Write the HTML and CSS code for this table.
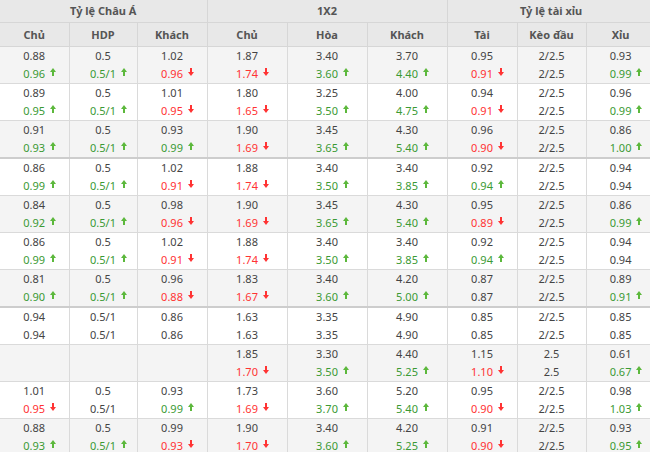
FILE: index.html
```html
<!DOCTYPE html>
<html lang="vi">
<head>
<meta charset="utf-8">
<title>Tỷ lệ kèo</title>
<link rel="stylesheet" href="styles.css">
</head>
<body>
<table class="odds">
<colgroup>
<col class="c69"><col class="c68"><col class="c70">
<col class="c80"><col class="c80"><col class="c80">
<col class="c70"><col class="c69"><col class="c69">
</colgroup>
<thead>
<tr class="h1"><th colspan="3" class="first">Tỷ lệ Châu Á</th><th colspan="3">1X2</th><th colspan="3">Tỷ lệ tài xỉu</th></tr>
<tr class="h2"><th class="first">Chủ</th><th>HDP</th><th>Khách</th><th>Chủ</th><th>Hòa</th><th>Khách</th><th>Tài</th><th>Kèo đầu</th><th>Xỉu</th></tr>
</thead>
<tbody>
<tr class="alt">
<td class="first"><div>0.88</div><div class="g">0.96<span class="up"></span></div></td>
<td><div>0.5</div><div class="g">0.5/1<span class="up"></span></div></td>
<td><div>1.02</div><div class="r">0.96<span class="dn"></span></div></td>
<td><div>1.87</div><div class="r">1.74<span class="dn"></span></div></td>
<td><div>3.40</div><div class="g">3.60<span class="up"></span></div></td>
<td><div>3.70</div><div class="g">4.40<span class="up"></span></div></td>
<td><div>0.95</div><div class="r">0.91<span class="dn"></span></div></td>
<td><div>2/2.5</div><div>2/2.5</div></td>
<td><div>0.93</div><div class="g">0.99<span class="up"></span></div></td>
</tr>
<tr>
<td class="first"><div>0.89</div><div class="g">0.95<span class="up"></span></div></td>
<td><div>0.5</div><div class="g">0.5/1<span class="up"></span></div></td>
<td><div>1.01</div><div class="r">0.95<span class="dn"></span></div></td>
<td><div>1.80</div><div class="r">1.65<span class="dn"></span></div></td>
<td><div>3.25</div><div class="g">3.50<span class="up"></span></div></td>
<td><div>4.00</div><div class="g">4.75<span class="up"></span></div></td>
<td><div>0.94</div><div class="r">0.91<span class="dn"></span></div></td>
<td><div>2/2.5</div><div>2/2.5</div></td>
<td><div>0.96</div><div class="g">0.99<span class="up"></span></div></td>
</tr>
<tr class="alt">
<td class="first"><div>0.91</div><div class="g">0.93<span class="up"></span></div></td>
<td><div>0.5</div><div class="g">0.5/1<span class="up"></span></div></td>
<td><div>0.93</div><div class="g">0.99<span class="up"></span></div></td>
<td><div>1.90</div><div class="r">1.69<span class="dn"></span></div></td>
<td><div>3.45</div><div class="g">3.65<span class="up"></span></div></td>
<td><div>4.30</div><div class="g">5.40<span class="up"></span></div></td>
<td><div>0.96</div><div class="r">0.90<span class="dn"></span></div></td>
<td><div>2/2.5</div><div>2/2.5</div></td>
<td><div>0.86</div><div class="g">1.00<span class="up"></span></div></td>
</tr>
<tr class="grp">
<td class="first"><div>0.86</div><div class="g">0.99<span class="up"></span></div></td>
<td><div>0.5</div><div class="g">0.5/1<span class="up"></span></div></td>
<td><div>1.02</div><div class="r">0.91<span class="dn"></span></div></td>
<td><div>1.88</div><div class="r">1.74<span class="dn"></span></div></td>
<td><div>3.40</div><div class="g">3.50<span class="up"></span></div></td>
<td><div>3.40</div><div class="g">3.85<span class="up"></span></div></td>
<td><div>0.92</div><div class="g">0.94<span class="up"></span></div></td>
<td><div>2/2.5</div><div>2/2.5</div></td>
<td><div>0.94</div><div>0.94</div></td>
</tr>
<tr class="alt">
<td class="first"><div>0.84</div><div class="g">0.92<span class="up"></span></div></td>
<td><div>0.5</div><div class="g">0.5/1<span class="up"></span></div></td>
<td><div>0.98</div><div class="r">0.96<span class="dn"></span></div></td>
<td><div>1.90</div><div class="r">1.69<span class="dn"></span></div></td>
<td><div>3.45</div><div class="g">3.65<span class="up"></span></div></td>
<td><div>4.30</div><div class="g">5.40<span class="up"></span></div></td>
<td><div>0.95</div><div class="r">0.89<span class="dn"></span></div></td>
<td><div>2/2.5</div><div>2/2.5</div></td>
<td><div>0.86</div><div class="g">0.99<span class="up"></span></div></td>
</tr>
<tr>
<td class="first"><div>0.86</div><div class="g">0.99<span class="up"></span></div></td>
<td><div>0.5</div><div class="g">0.5/1<span class="up"></span></div></td>
<td><div>1.02</div><div class="r">0.91<span class="dn"></span></div></td>
<td><div>1.88</div><div class="r">1.74<span class="dn"></span></div></td>
<td><div>3.40</div><div class="g">3.50<span class="up"></span></div></td>
<td><div>3.40</div><div class="g">3.85<span class="up"></span></div></td>
<td><div>0.92</div><div class="g">0.94<span class="up"></span></div></td>
<td><div>2/2.5</div><div>2/2.5</div></td>
<td><div>0.94</div><div>0.94</div></td>
</tr>
<tr class="alt">
<td class="first"><div>0.81</div><div class="g">0.90<span class="up"></span></div></td>
<td><div>0.5</div><div class="g">0.5/1<span class="up"></span></div></td>
<td><div>0.96</div><div class="r">0.88<span class="dn"></span></div></td>
<td><div>1.83</div><div class="r">1.67<span class="dn"></span></div></td>
<td><div>3.40</div><div class="g">3.60<span class="up"></span></div></td>
<td><div>4.20</div><div class="g">5.00<span class="up"></span></div></td>
<td><div>0.87</div><div>0.87</div></td>
<td><div>2/2.5</div><div>2/2.5</div></td>
<td><div>0.89</div><div class="g">0.91<span class="up"></span></div></td>
</tr>
<tr class="grp">
<td class="first"><div>0.94</div><div>0.94</div></td>
<td><div>0.5/1</div><div>0.5/1</div></td>
<td><div>0.86</div><div>0.86</div></td>
<td><div>1.63</div><div>1.63</div></td>
<td><div>3.35</div><div>3.35</div></td>
<td><div>4.90</div><div>4.90</div></td>
<td><div>0.85</div><div>0.85</div></td>
<td><div>2/2.5</div><div>2/2.5</div></td>
<td><div>0.85</div><div>0.85</div></td>
</tr>
<tr class="alt">
<td class="first"></td>
<td></td>
<td></td>
<td><div>1.85</div><div class="r">1.70<span class="dn"></span></div></td>
<td><div>3.30</div><div class="g">3.50<span class="up"></span></div></td>
<td><div>4.40</div><div class="g">5.25<span class="up"></span></div></td>
<td><div>1.15</div><div class="r">1.10<span class="dn"></span></div></td>
<td><div>2.5</div><div>2.5</div></td>
<td><div>0.61</div><div class="g">0.67<span class="up"></span></div></td>
</tr>
<tr>
<td class="first"><div>1.01</div><div class="r">0.95<span class="dn"></span></div></td>
<td><div>0.5</div><div>0.5/1</div></td>
<td><div>0.93</div><div class="g">0.99<span class="up"></span></div></td>
<td><div>1.73</div><div class="r">1.69<span class="dn"></span></div></td>
<td><div>3.60</div><div class="g">3.70<span class="up"></span></div></td>
<td><div>5.20</div><div class="g">5.40<span class="up"></span></div></td>
<td><div>0.95</div><div class="r">0.90<span class="dn"></span></div></td>
<td><div>2/2.5</div><div>2/2.5</div></td>
<td><div>0.98</div><div class="g">1.03<span class="up"></span></div></td>
</tr>
<tr class="alt">
<td class="first"><div>0.88</div><div class="g">0.93<span class="up"></span></div></td>
<td><div>0.5</div><div class="g">0.5/1<span class="up"></span></div></td>
<td><div>0.99</div><div class="r">0.93<span class="dn"></span></div></td>
<td><div>1.90</div><div class="r">1.70<span class="dn"></span></div></td>
<td><div>3.40</div><div class="g">3.60<span class="up"></span></div></td>
<td><div>4.20</div><div class="g">5.25<span class="up"></span></div></td>
<td><div>0.91</div><div class="r">0.90<span class="dn"></span></div></td>
<td><div>2/2.5</div><div>2/2.5</div></td>
<td><div>0.93</div><div class="g">0.95<span class="up"></span></div></td>
</tr>
</tbody>
</table>
</body>
</html>
```

FILE: styles.css
```css
html, body {
  margin: 0;
  padding: 0;
  background: #ffffff;
  overflow: hidden;
}

.odds {
  border-collapse: collapse;
  table-layout: fixed;
  width: 655px;
  font-family: "Noto Sans", "DejaVu Sans", sans-serif;
  font-size: 11px;
  color: #444444;
}

.c68 { width: 68px; }
.c69 { width: 69px; }
.c70 { width: 70px; }
.c80 { width: 80px; }

.odds th {
  background: #e8e8e8;
  color: #555555;
  font-weight: bold;
  text-align: center;
  padding: 0;
  border: 1px solid #d6d6d6;
}

.h1 th {
  border-top: 0;
  line-height: 22px;
}

.h2 th {
  line-height: 23px;
}

.odds .first {
  border-left: 0;
}

.odds td {
  padding: 0;
  height: 36px;
  text-align: center;
  vertical-align: top;
  border: 1px solid #dadada;
  line-height: 18px;
  background: #ffffff;
}

.odds tr.alt td {
  background: #f4f4f4;
}

.odds tr.grp td {
  border-top: 2px solid #cdcdcd;
}

.g { color: #3b9a34; }
.r { color: #ff3333; }

.up, .dn {
  display: inline-block;
  position: relative;
  width: 0;
  height: 0;
}

.up::before {
  content: "";
  position: absolute;
  left: 5px;
  top: -10px;
  border-left: 3px solid transparent;
  border-right: 3px solid transparent;
  border-bottom: 4px solid #5cb83c;
}

.up::after {
  content: "";
  position: absolute;
  left: 7px;
  top: -6px;
  width: 2px;
  height: 4px;
  background: #5cb83c;
}

.dn::before {
  content: "";
  position: absolute;
  left: 7px;
  top: -10px;
  width: 2px;
  height: 4px;
  background: #ff3333;
}

.dn::after {
  content: "";
  position: absolute;
  left: 5px;
  top: -6px;
  border-left: 3px solid transparent;
  border-right: 3px solid transparent;
  border-top: 4px solid #ff3333;
}
```
